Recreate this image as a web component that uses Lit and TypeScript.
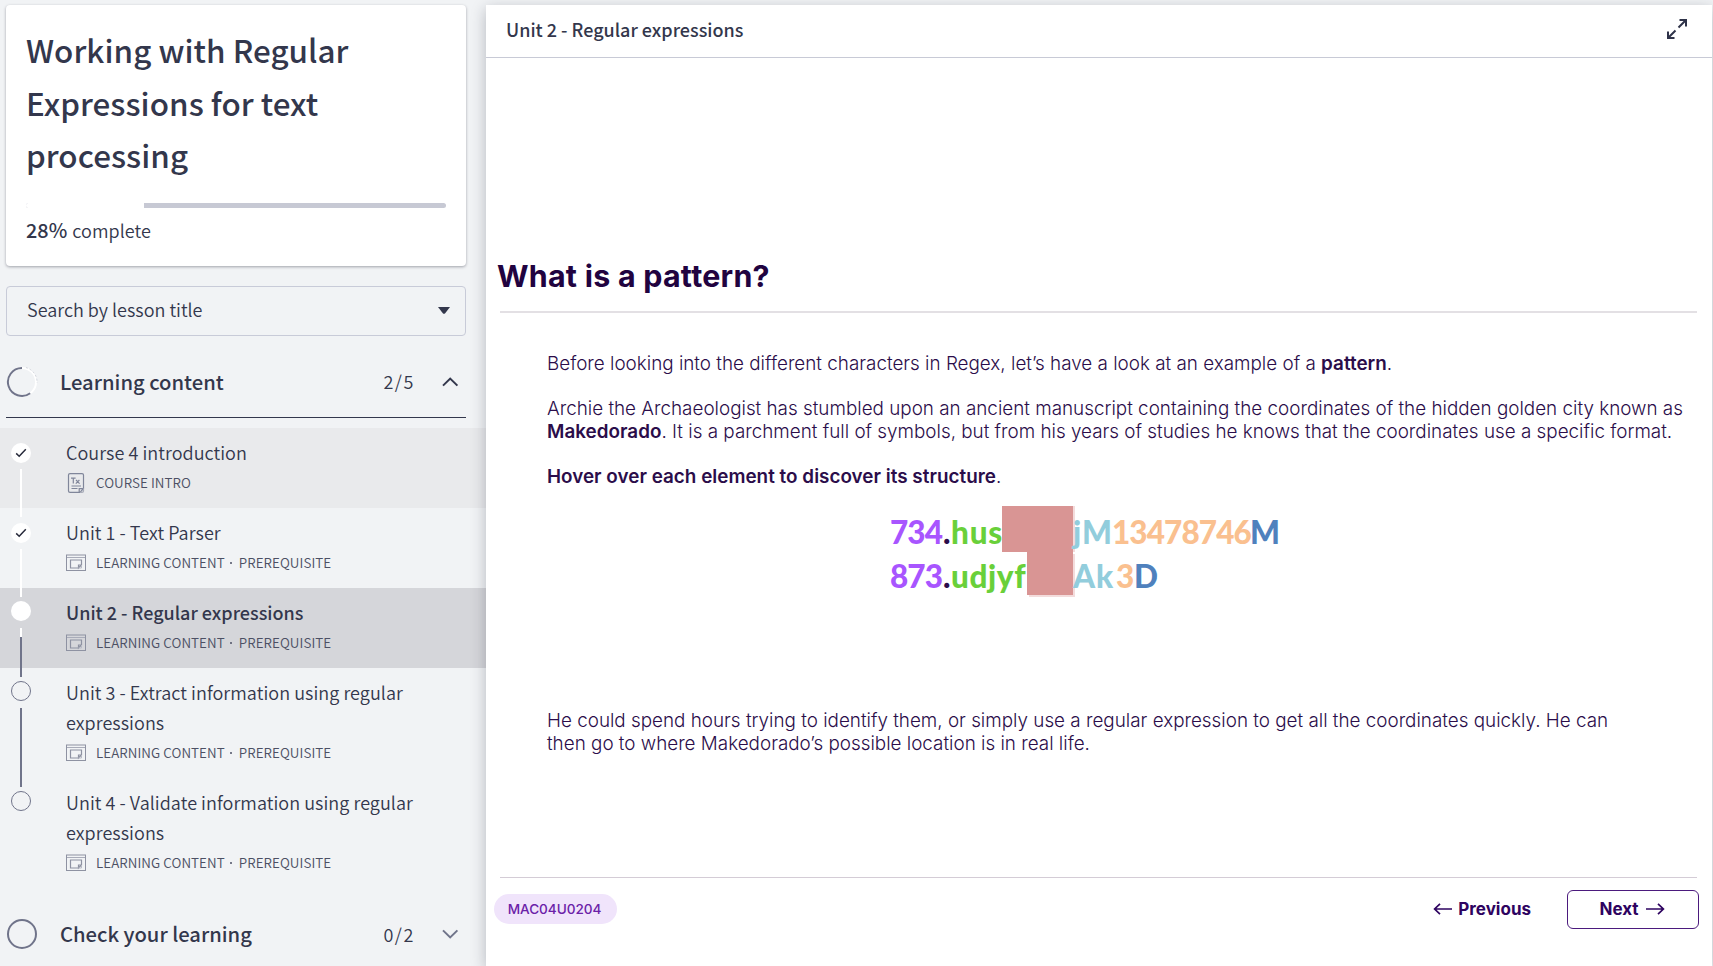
import { LitElement, html, css } from "lit";
import { customElement } from "lit/decorators.js";

type Seg = { text?: string; cls: string };

type Lesson = {
  title: string;
  tags: string[];
  kind: "text" | "slides";
  state: "done" | "current" | "todo";
  shaded?: boolean;
};

const unitTags = ["LEARNING CONTENT", "PREREQUISITE"];

const lessons: Lesson[] = [
  { title: "Course 4 introduction", tags: ["COURSE INTRO"], kind: "text", state: "done", shaded: true },
  { title: "Unit 1 - Text Parser", tags: unitTags, kind: "slides", state: "done" },
  { title: "Unit 2 - Regular expressions", tags: unitTags, kind: "slides", state: "current" },
  { title: "Unit 3 - Extract information using regular expressions", tags: unitTags, kind: "slides", state: "todo" },
  { title: "Unit 4 - Validate information using regular expressions", tags: unitTags, kind: "slides", state: "todo" },
];

const codeRows: Seg[][] = [
  [
    { text: "734", cls: "purple w53" },
    { text: ".", cls: "dark w8" },
    { text: "hus", cls: "green w51 wide" },
    { cls: "mask w71" },
    { text: "jM", cls: "aqua w39 wider" },
    { text: "13478746", cls: "peach w138" },
    { text: "M", cls: "blue" },
  ],
  [
    { text: "873", cls: "purple w53" },
    { text: ".", cls: "dark w8" },
    { text: "udjyf", cls: "green w76 loose" },
    { cls: "mask edge w46" },
    { text: "Ak", cls: "aqua w43 wider" },
    { text: "3", cls: "peach w18" },
    { text: "D", cls: "blue" },
  ],
];

const slidesIcon = html`<svg class="kind" width="20" height="20" viewBox="0 0 20 20" fill="none" stroke="#8e92a2">
  <rect x="0.5" y="2" width="19" height="15.5" />
  <path d="M1 4.5H19" stroke="#a9acb9" />
  <path d="M12.5 15H4.5V7H15.5V12L12.5 15V12H15.5" stroke-width="1.2" />
  <path d="M15.5 12V15H12.5" stroke="#b9bcc6" />
</svg>`;

const textIcon = html`<svg class="kind" width="20" height="20" viewBox="0 0 20 20" fill="none" stroke="#80869a" stroke-width="1.2">
  <path d="M2.5 2Q2.5 0.6 4 0.6H16Q17.5 0.6 17.5 2V15.5L14 19.4H4Q2.5 19.4 2.5 18Z M13.2 19.2V15.6H17.2" />
  <path d="M14 19.4H16Q17.5 19.4 17.5 18V15.5" stroke="#a9acb9" />
  <path d="M5 5.2H9.6M7.3 5.2V10.5 M10 7L13.6 10.6M13.4 7L9.8 10.6" />
  <path d="M5.5 13H15M5.5 15.5H11.5" />
</svg>`;

@customElement("app-root")
export class AppRoot extends LitElement {
  static styles = css`
    :host {
      display: flex;
      box-sizing: border-box;
      width: 100%;
      height: 966px;
      overflow: hidden;
      background: #f1f3f5;
      color: #33374c;
      font-family: "Noto Sans CJK SC", sans-serif;
      font-size: 18px;
    }
    * { box-sizing: border-box; }
    svg { display: block; flex: none; }

    /* Sidebar */
    .side { width: 486px; flex: none; display: flex; flex-direction: column; padding-top: 5px; font-weight: 350; letter-spacing: 0.05px; }
    .card {
      flex: none;
      margin: 0 20px 0 6px;
      height: 261px;
      padding: 19px 20px 0;
      background: #fff;
      border-radius: 4px;
      box-shadow: 0 1px 3px rgba(40, 44, 60, 0.4);
    }
    .card h1 { margin: 0; font-size: 31.4px; font-weight: 500; line-height: 52.6px; height: 158px; letter-spacing: 0.04px; }
    .bar { margin-top: 21px; height: 5px; background: #c7c9d4; border-radius: 3px; overflow: hidden; }
    .fill { height: 5px; background: #fff; }
    .pct { margin-top: 8px; line-height: 28px; height: 28px; display: flex; gap: 5px; align-items: baseline; }
    .pct b { font-size: 19.8px; font-weight: 500; }
    .search {
      margin: 20px 20px 0 6px;
      height: 50px;
      padding: 0 15px 2px 20px;
      display: flex;
      flex: none;
      align-items: center;
      justify-content: space-between;
      border: 1px solid #c8cbd8;
      border-radius: 4px;
    }
    .search span { padding-bottom: 2px; letter-spacing: 0; }
    .section { display: flex; flex: none; align-items: center; height: 82px; margin: 0 20px 0 6px; padding: 9px 7px 0 0; }
    .section.open { border-bottom: 1px solid #33374c; padding-top: 10px; }
    .section .name { margin-left: 22px; flex: 1; font-size: 20.2px; font-weight: 500; line-height: 30px; letter-spacing: 0; }
    .section .count { letter-spacing: 1.6px; margin-right: 26px; padding-bottom: 1px; }
    .list { padding-top: 10px; flex: none; }
    .lesson { display: flex; padding-left: 11px; min-height: 80px; }
    .lesson.shaded { background: #e9eaec; }
    .lesson.current { background: #d5d6da; }
    .rail { width: 20px; display: flex; flex-direction: column; align-items: center; flex: none; }
    .seg { width: 2px; flex: none; background: #fff; }
    .seg.grey { background: #70748a; }
    .seg.none { background: transparent; }
    .top { height: 9px; }
    .rest { flex: 1; margin-top: 6px; }
    .rest.late { margin-top: 7px; }
    .split { height: 9px; margin-top: 7px; }
    .after { flex: 1; }
    .dot { width: 20px; height: 20px; flex: none; border-radius: 50%; background: #fff; margin-top: 6px; }
    .dot.high { margin-top: 4px; }
    .dot.todo { background: none; border: 1px solid #70748a; }
    .body { padding: 9px 0 11px 35px; width: 400px; }
    .title { line-height: 30px; }
    .current .title { font-weight: 500; letter-spacing: 0; }
    .tags { display: flex; align-items: center; height: 30px; font-size: 13.4px; color: #4c5064; letter-spacing: 0.07px; }
    .tag { margin-left: 10px; }
    .sep { width: 2px; height: 2px; border-radius: 1px; background: #4c5064; margin: 2px -3px 0 5px; }
    .kind { margin-top: 2px; }
    .section.closed { height: 76px; margin-top: 8px; padding-top: 0; }

    /* Lesson player */
    .main {
      flex: 1;
      margin: 5px 1px 0 0;
      background: #fff;
      display: flex;
      flex-direction: column;
      box-shadow: 0 4px 14px rgba(30, 34, 50, 0.28);
      z-index: 1;
      min-width: 0;
    }
    .head {
      height: 53px;
      flex: none;
      display: flex;
      align-items: center;
      justify-content: space-between;
      padding: 0 25px 4px 20px;
      border-bottom: 1px solid #c8cad6;
      font-weight: 500;
    }
    .slide { flex: 1; display: flex; flex-direction: column; padding: 195px 15px 0 14px; color: #2b0d4a; font-family: Inter, sans-serif; }
    h2 { margin: 0 0 0 -3px; font-size: 30.4px; line-height: 46px; letter-spacing: 0.25px; font-weight: 700; color: #210340; }
    .rule { height: 2px; margin-top: 12px; background: #e3e0e4; flex: none; }
    .copy { padding: 39px 0 0 47px; font-size: 18.85px; font-weight: 300; line-height: 23px; white-space: nowrap; }
    .copy p { margin: 0 0 22px; }
    .copy b { font-weight: 600; letter-spacing: 0.02px; }
    .code { margin: -4px 0 0 390px; font-family: Lato, sans-serif; font-weight: 900; font-size: 31.5px; }
    .row { display: flex; height: 46px; line-height: 52px; letter-spacing: -0.9px; }
    .row + .row { height: 43px; line-height: 48px; }
    .row span { flex: none; white-space: nowrap; }
    .purple { color: #a855ff; }
    .dark { color: #2b0d4a; }
    .green { color: #69d03a; }
    .aqua { color: #92cddc; }
    .peach { color: #fac08f; }
    .blue { color: #4f81bd; }
    .mask { background: #d99594; box-shadow: 2px 0 0 #f3dcdc; }
    .mask.edge { box-shadow: 2px 2px 0 #f3dcdc; }
    .loose { letter-spacing: 0.6px; }
    .wide { letter-spacing: 0.8px; }
    .wider { letter-spacing: 1px; }
    .w53 { width: 53px; } .w8 { width: 8px; } .w51 { width: 51px; } .w71 { width: 71px; }
    .w39 { width: 39px; } .w138 { width: 138px; } .w76 { width: 76px; } .w46 { width: 46px; }
    .w43 { width: 43px; } .w18 { width: 18px; }
    .outro { margin: 114px 0 0; padding: 0 0 0 47px; font-size: 18.85px; font-weight: 300; line-height: 23px; white-space: nowrap; }
    .foot { margin-top: auto; height: 89px; border-top: 1px solid #d4ccd6; display: flex; align-items: flex-start; justify-content: space-between; padding-top: 12px; }
    .pill { margin: 4px 0 0 -6px; width: 123px; height: 30px; line-height: 31px; padding-right: 2px; text-align: center; border-radius: 15px; background: #f0e4fb; color: #6b21a8; font-size: 13.6px; font-weight: 500; letter-spacing: -0.05px; }
    .nav { display: flex; align-items: center; font-size: 17px; font-weight: 700; color: #2e0360; margin-right: -2px; }
    .prev { display: flex; align-items: center; gap: 5px; margin-right: 36px; padding-bottom: 1px; }
    .next { display: flex; align-items: center; justify-content: center; gap: 6px; width: 132px; height: 39px; padding: 0 2px 1px 0; border: 1px solid #4b1a7d; border-radius: 6px; }
  `;

  private rail(l: Lesson, i: number) {
    const last = i === lessons.length - 1;
    const top = i === 0 ? "none" : l.state === "todo" ? "grey" : "";
    return html`<div class="rail">
      <div class="seg top ${top}"></div>
      ${l.state === "done"
        ? html`<svg class="dot" viewBox="0 0 20 20"><path d="M5.2 10.4L8.2 13.2L14.8 6.2" fill="none" stroke="#26293a" stroke-width="1.5" /></svg>`
        : html`<div class="dot high ${l.state}"></div>`}
      ${l.state === "current"
        ? html`<div class="seg split"></div><div class="seg grey after"></div>`
        : html`<div class="seg rest ${last ? "none" : l.state === "todo" ? "grey late" : ""}"></div>`}
    </div>`;
  }

  render() {
    return html`
      <aside class="side">
        <div class="card">
          <h1>Working with Regular Expressions for text processing</h1>
          <div class="bar"><div class="fill" style="width:28%"></div></div>
          <div class="pct"><b>28%</b><span>complete</span></div>
        </div>
        <div class="search">
          <span>Search by lesson title</span>
          <svg width="12" height="7" viewBox="0 0 12 7"><path d="M0 0H12L7.2 6.2Q6 7.4 4.8 6.2Z" fill="#33374c" /></svg>
        </div>
        <div class="section open">
          <svg width="32" height="32" viewBox="0 0 32 32" fill="none" stroke-width="2">
            <circle cx="16" cy="16" r="14" stroke="#fff" />
            <path d="M16 2A14 14 0 1 0 24.2 27.3" stroke="#70748a" />
            <path d="M20 1.6A15 15 0 0 1 31 17" stroke="#b9bcc8" stroke-width="0.6" stroke-dasharray="2 2" />
          </svg>
          <span class="name">Learning content</span>
          <span class="count">2/5</span>
          <svg width="18" height="10" viewBox="0 0 18 10"><path d="M2 8.6L9.2 1.6L16.4 8.6" fill="none" stroke="#33374c" stroke-width="2" /></svg>
        </div>
        <div class="list">
          ${lessons.map(
            (l, i) => html`<div class="lesson ${l.state} ${l.shaded ? "shaded" : ""}">
              ${this.rail(l, i)}
              <div class="body">
                <div class="title">${l.title}</div>
                <div class="tags">
                  ${l.kind === "text" ? textIcon : slidesIcon}
                  ${l.tags.map((t, n) => html`${n ? html`<i class="sep"></i>` : ""}<span class="tag">${t}</span>`)}
                </div>
              </div>
            </div>`
          )}
        </div>
        <div class="section closed">
          <svg width="32" height="32" viewBox="0 0 32 32"><circle cx="16" cy="16" r="14" fill="none" stroke="#70748a" stroke-width="2" /></svg>
          <span class="name">Check your learning</span>
          <span class="count">0/2</span>
          <svg width="18" height="10" viewBox="0 0 18 10"><path d="M2 1.4L9.2 8.4L16.4 1.4" fill="none" stroke="#70748a" stroke-width="2" /></svg>
        </div>
      </aside>
      <main class="main">
        <div class="head">
          <span>Unit 2 - Regular expressions</span>
          <svg width="20" height="20" viewBox="0 0 20 20" fill="none" stroke="#2f3349" stroke-width="2">
            <path d="M12.5 1H19V7.5M19 1L11.5 8.5M1 12.5V19H7.5M1 19L8.5 11.5" />
          </svg>
        </div>
        <section class="slide">
          <h2>What is a pattern?</h2>
          <div class="rule"></div>
          <div class="copy">
            <p>Before looking into the different characters in Regex, let’s have a look at an example of a <b>pattern</b>.</p>
            <p>Archie the Archaeologist has stumbled upon an ancient manuscript containing the coordinates of the hidden golden city known as<br /><b>Makedorado</b>. It is a parchment full of symbols, but from his years of studies he knows that the coordinates use a specific format.</p>
            <p><b>Hover over each element to discover its structure</b>.</p>
          </div>
          <div class="code">
            ${codeRows.map((r) => html`<div class="row">${r.map((s) => html`<span class=${s.cls}>${s.text ?? ""}</span>`)}</div>`)}
          </div>
          <p class="outro">He could spend hours trying to identify them, or simply use a regular expression to get all the coordinates quickly. He can<br />then go to where Makedorado’s possible location is in real life.</p>
          <div class="foot">
            <span class="pill">MAC04U0204</span>
            <div class="nav">
              <span class="prev">
                <svg width="20" height="12" viewBox="0 0 20 12" fill="none" stroke="#2e0360" stroke-width="1.7"><path d="M19 6H1.5M7 0.8L1.6 6L7 11.2" /></svg>
                Previous
              </span>
              <span class="next">
                Next
                <svg width="20" height="12" viewBox="0 0 20 12" fill="none" stroke="#2e0360" stroke-width="1.7"><path d="M1 6H18.5M13 0.8L18.4 6L13 11.2" /></svg>
              </span>
            </div>
          </div>
        </section>
      </main>
    `;
  }
}
